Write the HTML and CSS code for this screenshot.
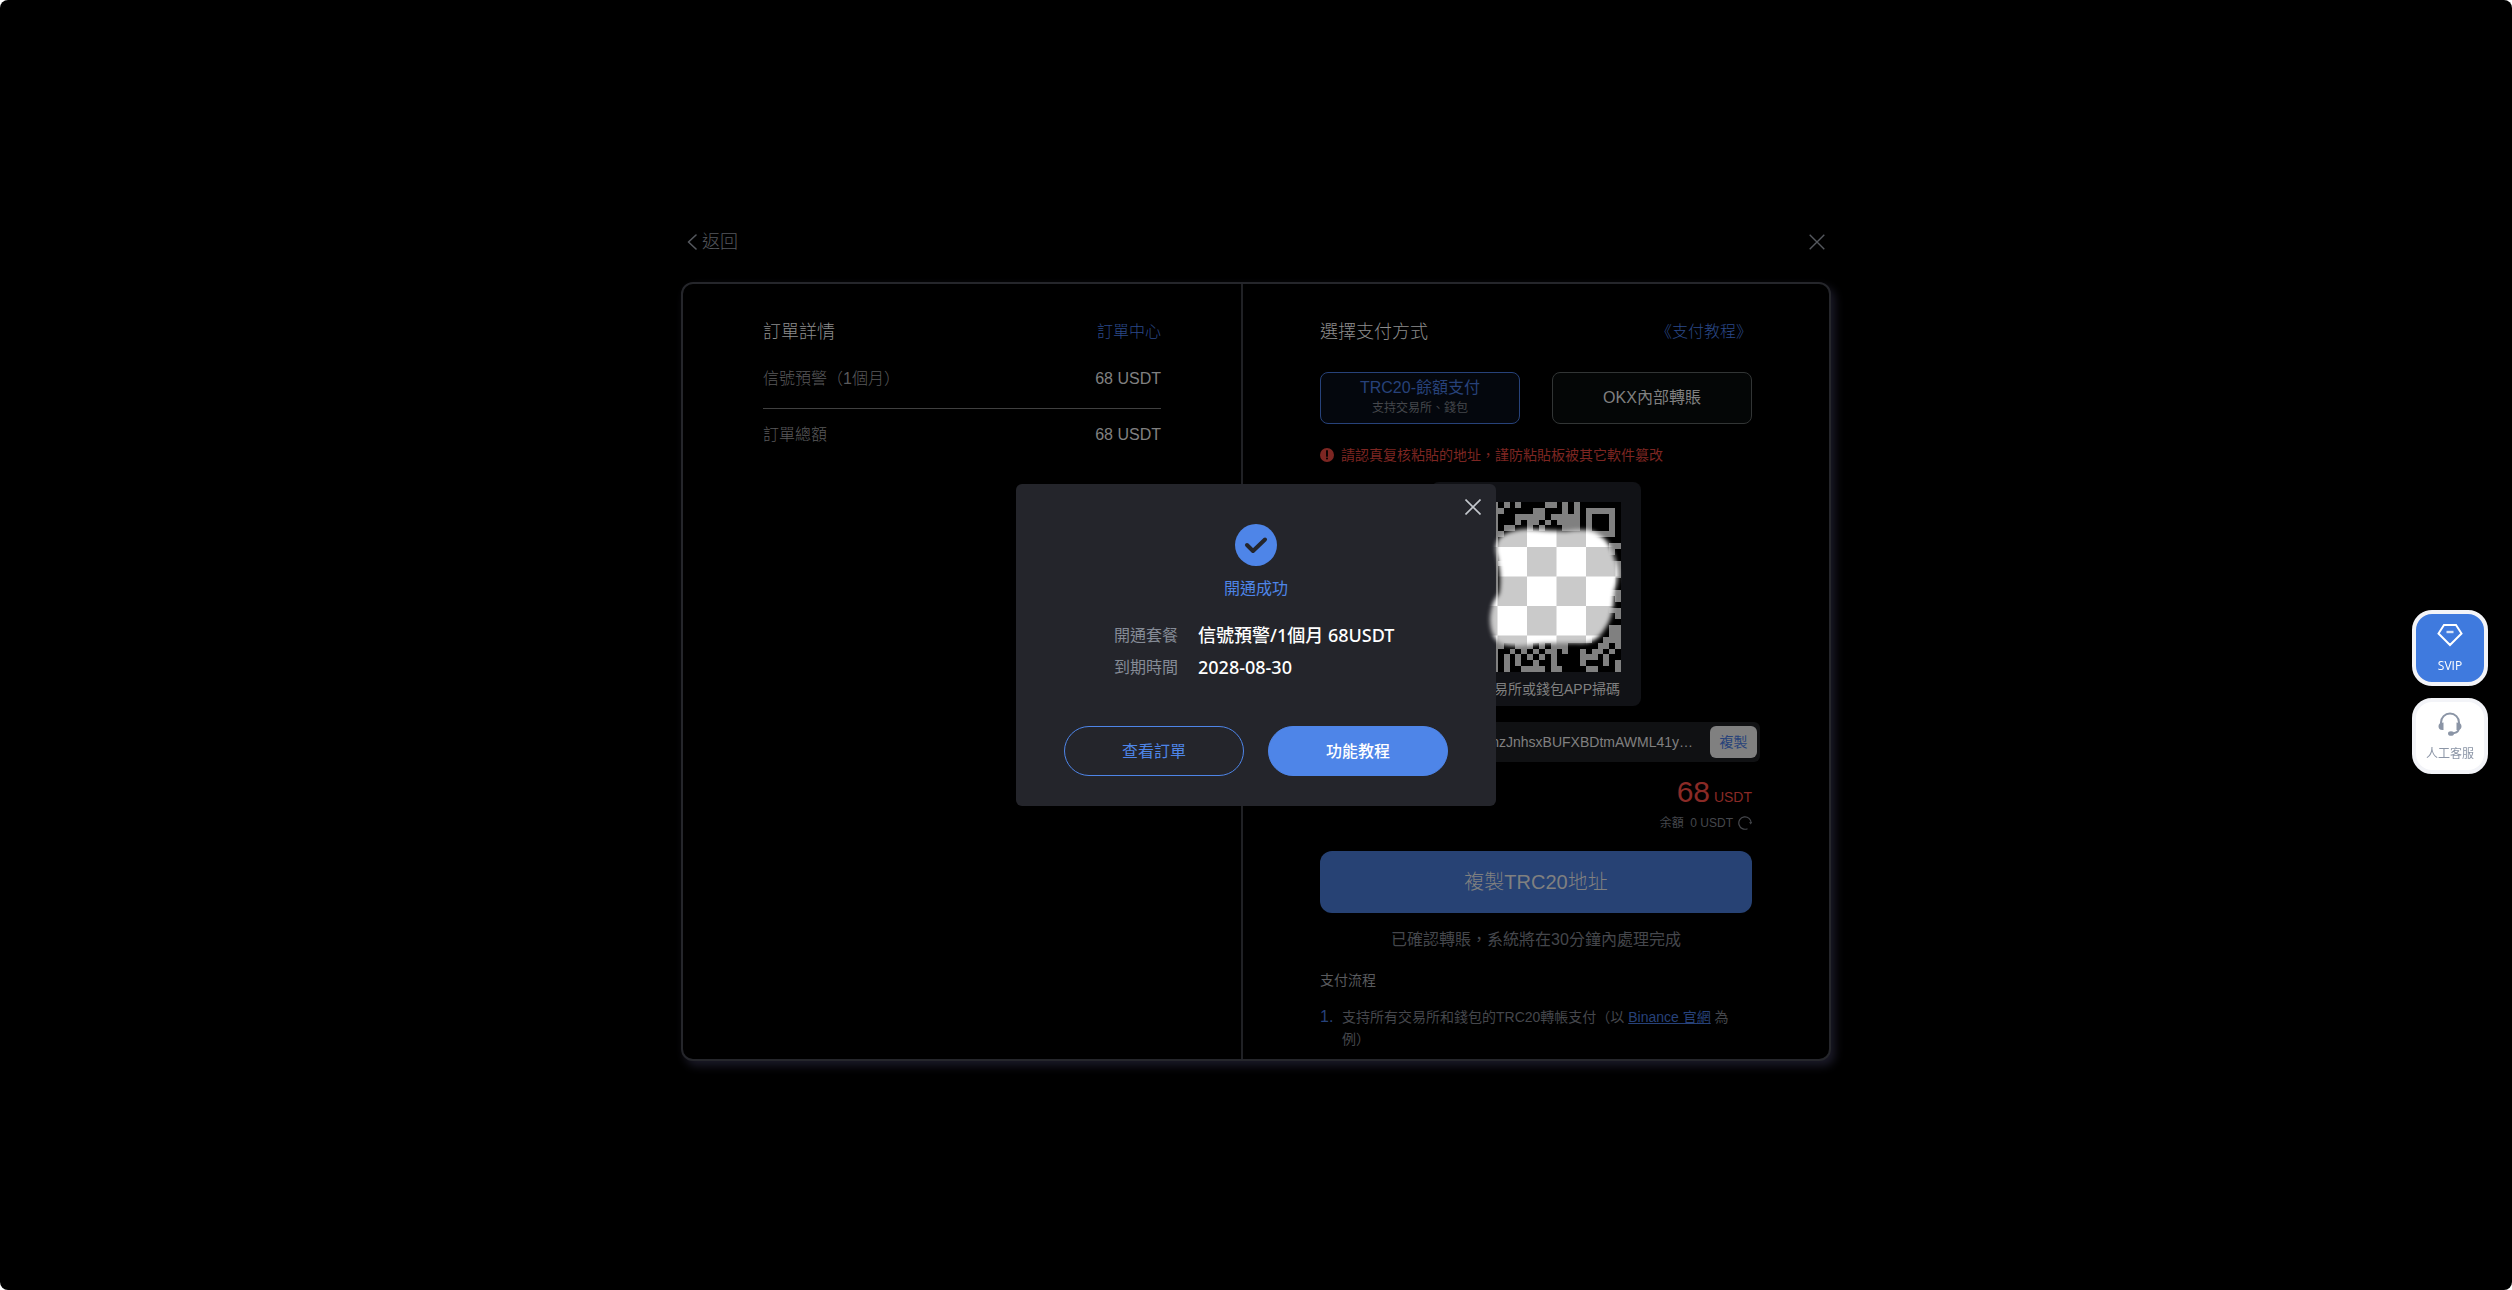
FILE: index.html
```html
<!DOCTYPE html>
<html lang="zh-Hant">
<head>
<meta charset="utf-8">
<meta name="viewport" content="width=device-width, initial-scale=1">
<title>訂單支付</title>
<link rel="stylesheet" href="styles.css">
</head>
<body>
<main class="page">
  <div class="checkout">
    <header class="topbar">
      <button class="back" type="button">
        <svg width="10" height="16" viewBox="0 0 10 16" fill="none" stroke="currentColor" stroke-width="1.6" stroke-linecap="round" stroke-linejoin="round" aria-hidden="true"><path d="M9 1 1.5 8 9 15"/></svg>
        返回
      </button>
      <button class="close" type="button" aria-label="關閉">
        <svg width="16" height="16" viewBox="0 0 16 16" fill="none" stroke="currentColor" stroke-width="1.4" aria-hidden="true"><path d="M.7.7l14.6 14.6M15.3.7.7 15.3"/></svg>
      </button>
    </header>

    <div class="card">
      <section class="order">
        <div class="head">
          <h2>訂單詳情</h2>
          <a href="#orders">訂單中心</a>
        </div>
        <dl class="lines">
          <div class="line"><dt>信號預警（1個月）</dt><dd>68 USDT</dd></div>
          <div class="line"><dt>訂單總額</dt><dd>68 USDT</dd></div>
        </dl>
      </section>

      <section class="payment">
        <div class="head">
          <h2>選擇支付方式</h2>
          <a href="#guide">《支付教程》</a>
        </div>
        <div class="methods">
          <button class="method method-active" type="button">TRC20-餘額支付<small>支持交易所、錢包</small></button>
          <button class="method" type="button">OKX內部轉賬</button>
        </div>
        <p class="warning">
          <svg width="14" height="14" viewBox="0 0 14 14" aria-hidden="true"><circle cx="7" cy="7" r="7" fill="currentColor"/><path d="M7 3v5" stroke="#000" stroke-width="1.8" stroke-linecap="round"/><circle cx="7" cy="10.6" r="1" fill="#000"/></svg>
          請認真复核粘貼的地址，謹防粘貼板被其它軟件篡改
        </p>
        <figure class="qr">
          <svg viewBox="0 0 29 29" shape-rendering="crispEdges" aria-hidden="true">
            <rect width="29" height="29" fill="#000"/>
            <path stroke="#808080" stroke-width="1" d="M7.5 0v29M9 .5h1M11 .5h1M16 .5h2M19 .5h1M21 .5h1M8 1.5h1M14 1.5h2M19 1.5h1M21 1.5h1M23 1.5h5M11 2.5h5M17 2.5h3M20 2.5h2M23 2.5h1M27 2.5h1M11 3.5h1M13 3.5h2M16 3.5h1M18 3.5h4M23 3.5h1M27 3.5h1M9 4.5h2M13 4.5h1M15 4.5h1M19 4.5h3M23 4.5h1M27 4.5h1M8 5.5h1M23 5.5h5M27 7.5h2M27 8.5h1M8 10.5h1M27 10.5h2M27 11.5h2M27 12.5h2M27 15.5h2M28 16.5h1M27 18.5h2M28 19.5h1M27 21.5h2M27 22.5h2M26 23.5h3M8 24.5h1M11 24.5h3M15 24.5h1M17 24.5h3M25 24.5h2M28 24.5h1M8 23.5h16M10 25.5h1M12 25.5h1M14 25.5h1M16 25.5h2M19 25.5h1M22 25.5h1M24 25.5h2M27 25.5h1M9 26.5h1M11 26.5h1M13 26.5h1M15 26.5h1M17 26.5h1M22 26.5h3M26 26.5h1M9 27.5h1M11 27.5h1M14 27.5h1M17 27.5h1M22 27.5h1M26 27.5h1M28 27.5h1M9 28.5h1M12 28.5h4M17 28.5h2M23 28.5h2M28 28.5h1"/>
          </svg>
          <figcaption>使用交易所或錢包APP掃碼</figcaption>
        </figure>
        <div class="address">
          <span class="address-text">TXkhzJnhsxBUFXBDtmAWML41y…</span>
          <button class="copy" type="button">複製</button>
        </div>
        <p class="amount"><strong>68</strong> USDT</p>
        <p class="balance">余額&nbsp; 0 USDT
          <button class="refresh" type="button" aria-label="刷新"><svg width="14" height="14" viewBox="0 0 14 14" fill="none" stroke="currentColor" stroke-width="1.2" aria-hidden="true"><path d="M9.500 12.700A6.200 6.200 0 1 1 13.200 7"/><path d="M11 6.200h3L12.800 8.500z" fill="currentColor" stroke="none"/></svg></button>
        </p>
        <button class="submit" type="button">複製TRC20地址</button>
        <p class="notice">已確認轉賬，系統將在30分鐘內處理完成</p>
        <h3>支付流程</h3>
        <ol class="steps">
          <li>支持所有交易所和錢包的TRC20轉帳支付（以 <a href="#binance">Binance 官網</a> 為例）</li>
        </ol>
      </section>
    </div>
  </div>
</main>

<div class="overlay">
  <div class="dialog" role="dialog" aria-labelledby="dialog-title">
    <button class="dialog-close" type="button" aria-label="關閉">
      <svg width="16" height="16" viewBox="0 0 16 16" fill="none" stroke="currentColor" stroke-width="1.6" aria-hidden="true"><path d="M.5.5l15 15M15.500.5l-15 15"/></svg>
    </button>
    <svg class="tick" width="42" height="42" viewBox="0 0 42 42" fill="none" aria-hidden="true"><circle cx="21" cy="21" r="21" fill="#4e85e8"/><path d="M12 21l6 6L30 15.500" stroke="#24252b" stroke-width="4" stroke-linecap="round" stroke-linejoin="round"/></svg>
    <h2 id="dialog-title">開通成功</h2>
    <dl class="result">
      <dt>開通套餐</dt><dd>信號預警/1個月 68USDT</dd>
      <dt>到期時間</dt><dd>2028-08-30</dd>
    </dl>
    <div class="actions">
      <button class="pill" type="button">查看訂單</button>
      <button class="pill pill-primary" type="button">功能教程</button>
    </div>
    <svg class="mask" width="144" height="134" viewBox="0 0 144 134" aria-hidden="true">
      <defs>
        <pattern id="checks" x="45" y="29" width="59" height="59" patternUnits="userSpaceOnUse">
          <rect width="59" height="59" fill="#fff"/>
          <rect x="0" y="0" width="29.500" height="29.500" fill="#cacaca"/>
          <rect x="29.500" y="29.500" width="29.500" height="29.500" fill="#cacaca"/>
        </pattern>
        <filter id="soft"><feGaussianBlur stdDeviation="2"/></filter>
        <mask id="blob"><path filter="url(#soft)" fill="#fff" d="M16 22C20 15 34 11 46 11C60 12 72 13 84 13C98 11 110 11 117 17C126 22 130 30 133 42C138 54 136 66 132 74C132 88 130 102 122 112C116 122 108 126 94 125H62C46 127 32 130 20 126C11 122 8 112 8 100C9 90 11 82 17 76C20 60 17 48 15 38C13 32 13 28 16 22Z"/></mask>
      </defs>
      <g mask="url(#blob)"><rect width="144" height="134" fill="url(#checks)"/></g>
    </svg>
  </div>
</div>

<aside class="floats">
  <a class="float float-vip" href="#svip">
    <svg width="26" height="24" viewBox="0 0 26 24" fill="none" stroke="#fff" stroke-width="2" aria-hidden="true"><path d="M7 2h12l5.500 8.500L13 22 1.500 10.500z"/><path d="M9.500 9h7" stroke-width="2.400" stroke-opacity=".8"/></svg>
    SVIP
  </a>
  <a class="float" href="#support">
    <svg width="26" height="26" viewBox="0 0 26 26" fill="none" stroke="#8b95a6" stroke-width="2" aria-hidden="true"><path d="M4 14v-2.500a9 9 0 0 1 18 0V14"/><path d="M22 18c-1 3-4 4.500-8 4.500"/><path d="M6.500 11.500v7.500C3 19.500 1.500 17.500 1.500 15.200S3 11.500 6.500 11.500zM19.500 11.500v7.500c3.500.5 5-1.500 5-3.800s-1.500-3.700-5-3.700z" fill="#8b95a6" stroke="none"/><ellipse cx="14" cy="22.500" rx="3" ry="2.300" fill="#8b95a6" stroke="none"/></svg>
    人工客服
  </a>
</aside>
</body>
</html>
```
FILE: styles.css
```css
* { box-sizing: border-box; }

html { background: #fff; }

body {
  margin: 0;
  min-height: 100vh;
  display: flex;
  background: #000;
  border-radius: 8px;
  color: #808080;
  font-family: "Liberation Sans", "Noto Sans CJK TC", sans-serif;
  font-size: 16px;
  line-height: 24px;
}

h2, h3, p, dl, dd, ol, figure { margin: 0; padding: 0; font-weight: inherit; }
a { color: #27427a; text-decoration: none; }
button {
  border: 0;
  padding: 0;
  background: none;
  color: inherit;
  font: inherit;
  cursor: pointer;
}
svg { display: block; flex: none; }

.page {
  flex: 1;
  display: flex;
  align-items: center;
  justify-content: center;
}
.checkout { width: 100%; max-width: 1150px; }

.topbar {
  display: flex;
  align-items: center;
  justify-content: space-between;
  padding: 0 6px 27px;
  color: #55585e;
  font-weight: 300;
}
.back { display: flex; align-items: center; gap: 5px; font-size: 18px; line-height: 26px; }

.card {
  display: grid;
  grid-template-columns: 560px 1fr;
  border: 2px solid #25262b;
  border-radius: 12px;
  box-shadow: 4px 5px 10px #1b1a28;
  background: #000;
}
.order { padding: 36px 80px; border-right: 2px solid #202125; }
.payment { padding: 36px 77px 9px; }

.head { display: flex; justify-content: space-between; color: #8c8c8c; font-weight: 300; }
.head h2 { font-size: 18px; }
.head a { color: #2b4988; }

.lines { margin-top: 23px; }
.line { display: flex; justify-content: space-between; }
.line dt { color: #5a5a5c; font-weight: 300; }
.line + .line { margin-top: 17px; padding-top: 14px; border-top: 1px solid #404040; }

.methods { display: grid; grid-template-columns: 1fr 1fr; gap: 32px; margin-top: 28px; }
.method {
  height: 52px;
  border: 1px solid #323535;
  border-radius: 8px;
  background: #040606;
  line-height: 20px;
}
.method small { display: block; font-size: 12px; color: #45474c; }
.method-active { border-color: #27427a; background: #04070d; color: #27427a; }

.warning {
  display: flex;
  align-items: center;
  gap: 7px;
  margin-top: 20px;
  color: #7d2622;
  font-size: 14px;
  line-height: 22px;
}

.qr {
  width: 210px;
  margin: 16px auto 0;
  padding: 20px 20px 7px;
  border-radius: 8px;
  background: #111216;
  font-size: 14px;
  line-height: 20px;
  text-align: center;
}
.qr svg { width: 100%; margin-bottom: 7px; }
.qr figcaption { white-space: nowrap; }

.address {
  display: flex;
  align-items: center;
  gap: 17px;
  height: 40px;
  margin: 16px -8px 0 0;
  padding: 0 3px 0 16px;
  border-radius: 6px;
  background: #101113;
  font-size: 14px;
}
.address-text { flex: 1; text-align: right; }
.copy {
  width: 47px;
  height: 32px;
  border-radius: 6px;
  background: #808080;
  color: #27427a;
}

.amount { margin-top: 13px; color: #8a2a26; font-size: 14px; line-height: 22px; text-align: right; }
.amount strong { font-size: 30px; font-weight: inherit; line-height: 34px; }
.balance {
  display: flex;
  align-items: center;
  justify-content: flex-end;
  gap: 5px;
  margin-top: 5px;
  color: #45474c;
  font-size: 12px;
  line-height: 18px;
}

.submit {
  display: block;
  width: 100%;
  height: 62px;
  margin-top: 19px;
  border-radius: 12px;
  background: #274274;
  font-size: 20px;
  font-weight: 300;
}
.notice { margin-top: 15px; color: #45474c; text-align: center; }
.payment h3 { margin-top: 17px; color: #5a5b5e; font-size: 14px; line-height: 22px; }

.steps { margin-top: 15px; padding-left: 22px; color: #45474c; font-size: 14px; line-height: 22px; list-style: none; counter-reset: step; }
.steps li { position: relative; padding-right: 16px; counter-increment: step; }
.steps li::before { content: counter(step) "."; position: absolute; left: -22px; color: #27427a; font-size: 16px; }
.steps a { text-decoration: underline; }

.overlay {
  position: fixed;
  inset: 0;
  display: flex;
  align-items: center;
  justify-content: center;
}
.dialog {
  position: relative;
  display: flex;
  flex-direction: column;
  align-items: center;
  width: 480px;
  padding: 40px 48px 30px;
  border-radius: 6px;
  background: #24252b;
  font-family: "Noto Sans", "Noto Sans CJK TC", sans-serif;
}
.dialog-close { position: absolute; top: 15px; right: 15px; color: #c3c7cd; }
.dialog h2 { margin-top: 10px; color: #4e85e8; font-size: 16px; }
.result {
  display: grid;
  grid-template-columns: 64px 200px;
  column-gap: 20px;
  row-gap: 8px;
  margin-top: 23px;
  color: #858b96;
}
.result dd { color: #fff; font-size: 18px; font-weight: 500; white-space: nowrap; }
.actions { display: grid; grid-template-columns: 1fr 1fr; gap: 24px; width: 100%; margin-top: 47px; }
.pill { height: 50px; border: 1px solid #4e85e8; border-radius: 25px; color: #4e85e8; }
.pill-primary { background: #4e85e8; color: #fff; font-weight: 500; }
.mask { position: absolute; left: 466px; top: 34px; pointer-events: none; }

.floats {
  position: fixed;
  right: 24px;
  top: 610px;
  display: grid;
  gap: 12px;
}
.float {
  display: flex;
  flex-direction: column;
  align-items: center;
  justify-content: space-between;
  width: 76px;
  height: 76px;
  padding: 9px 0 7px;
  border: 4px solid #f3f4f8;
  border-radius: 20px;
  background: #fff;
  color: #8b95a6;
  font-family: "Open Sans", "Noto Sans CJK TC", sans-serif;
  font-size: 12px;
  line-height: 18px;
}
.float-vip { background: #3f7ade; color: #fff; }
```
